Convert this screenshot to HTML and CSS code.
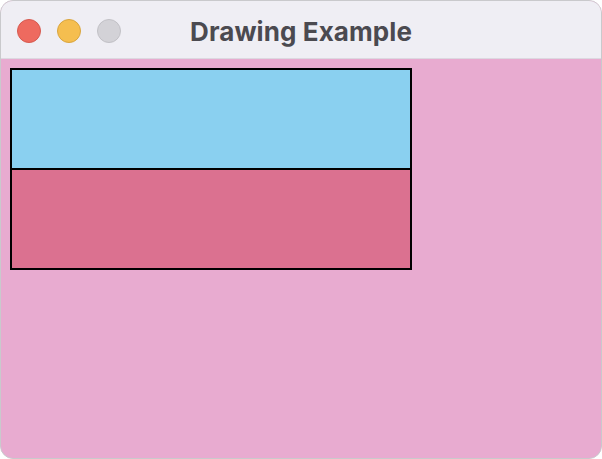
FILE: index.html
```html
<!DOCTYPE html>
<html>
<head>
<meta charset="utf-8">
<link rel="stylesheet" href="styles.css">
</head>
<body>
<div class="window">
  <div class="titlebar">
    <div class="lights">
      <span class="light red"></span>
      <span class="light yellow"></span>
      <span class="light grey"></span>
    </div>
    <div class="title">Drawing Example</div>
  </div>
  <div class="content">
    <div class="flag">
      <div class="band blue"></div>
      <div class="band rose"></div>
    </div>
  </div>
</div>
</body>
</html>
```
FILE: styles.css
```css
html, body {
  margin: 0;
  padding: 0;
  width: 602px;
  height: 459px;
  background: #ffffff;
  overflow: hidden;
}
.window {
  box-sizing: border-box;
  width: 602px;
  height: 459px;
  border: 1px solid #c9c9cc;
  border-radius: 13px;
  overflow: hidden;
  display: flex;
  flex-direction: column;
  background: #e8abd0;
}
.titlebar {
  flex: 0 0 58px;
  box-sizing: border-box;
  background: #efeef4;
  border-bottom: 1px solid #dcd8e0;
  display: flex;
  align-items: center;
  position: relative;
}
.lights {
  display: flex;
  gap: 16px;
  padding-left: 16px;
  margin-top: 2px;
}
.light {
  width: 24px;
  height: 24px;
  border-radius: 50%;
  box-sizing: border-box;
}
.red { background: #ee6a5f; border: 1px solid #d65a50; }
.yellow { background: #f5be4f; border: 1px solid #d9a53e; }
.grey { background: #d3d2d7; border: 1px solid #c2c1c6; }
.title {
  position: absolute;
  left: 189px;
  top: 15px;
  font-family: Inter, "Open Sans", sans-serif;
  font-weight: 700;
  font-size: 26px;
  color: #4b4a50;
  letter-spacing: 0.1px;
}
.content {
  flex: 1;
  padding: 9px 0 0 9px;
}
.flag {
  width: 402px;
  border: 2px solid #000;
  box-sizing: border-box;
  display: flex;
  flex-direction: column;
}
.band { height: 98px; }
.blue { background: #8ad0f0; border-bottom: 2px solid #000; }
.rose { background: #db7190; }
```
